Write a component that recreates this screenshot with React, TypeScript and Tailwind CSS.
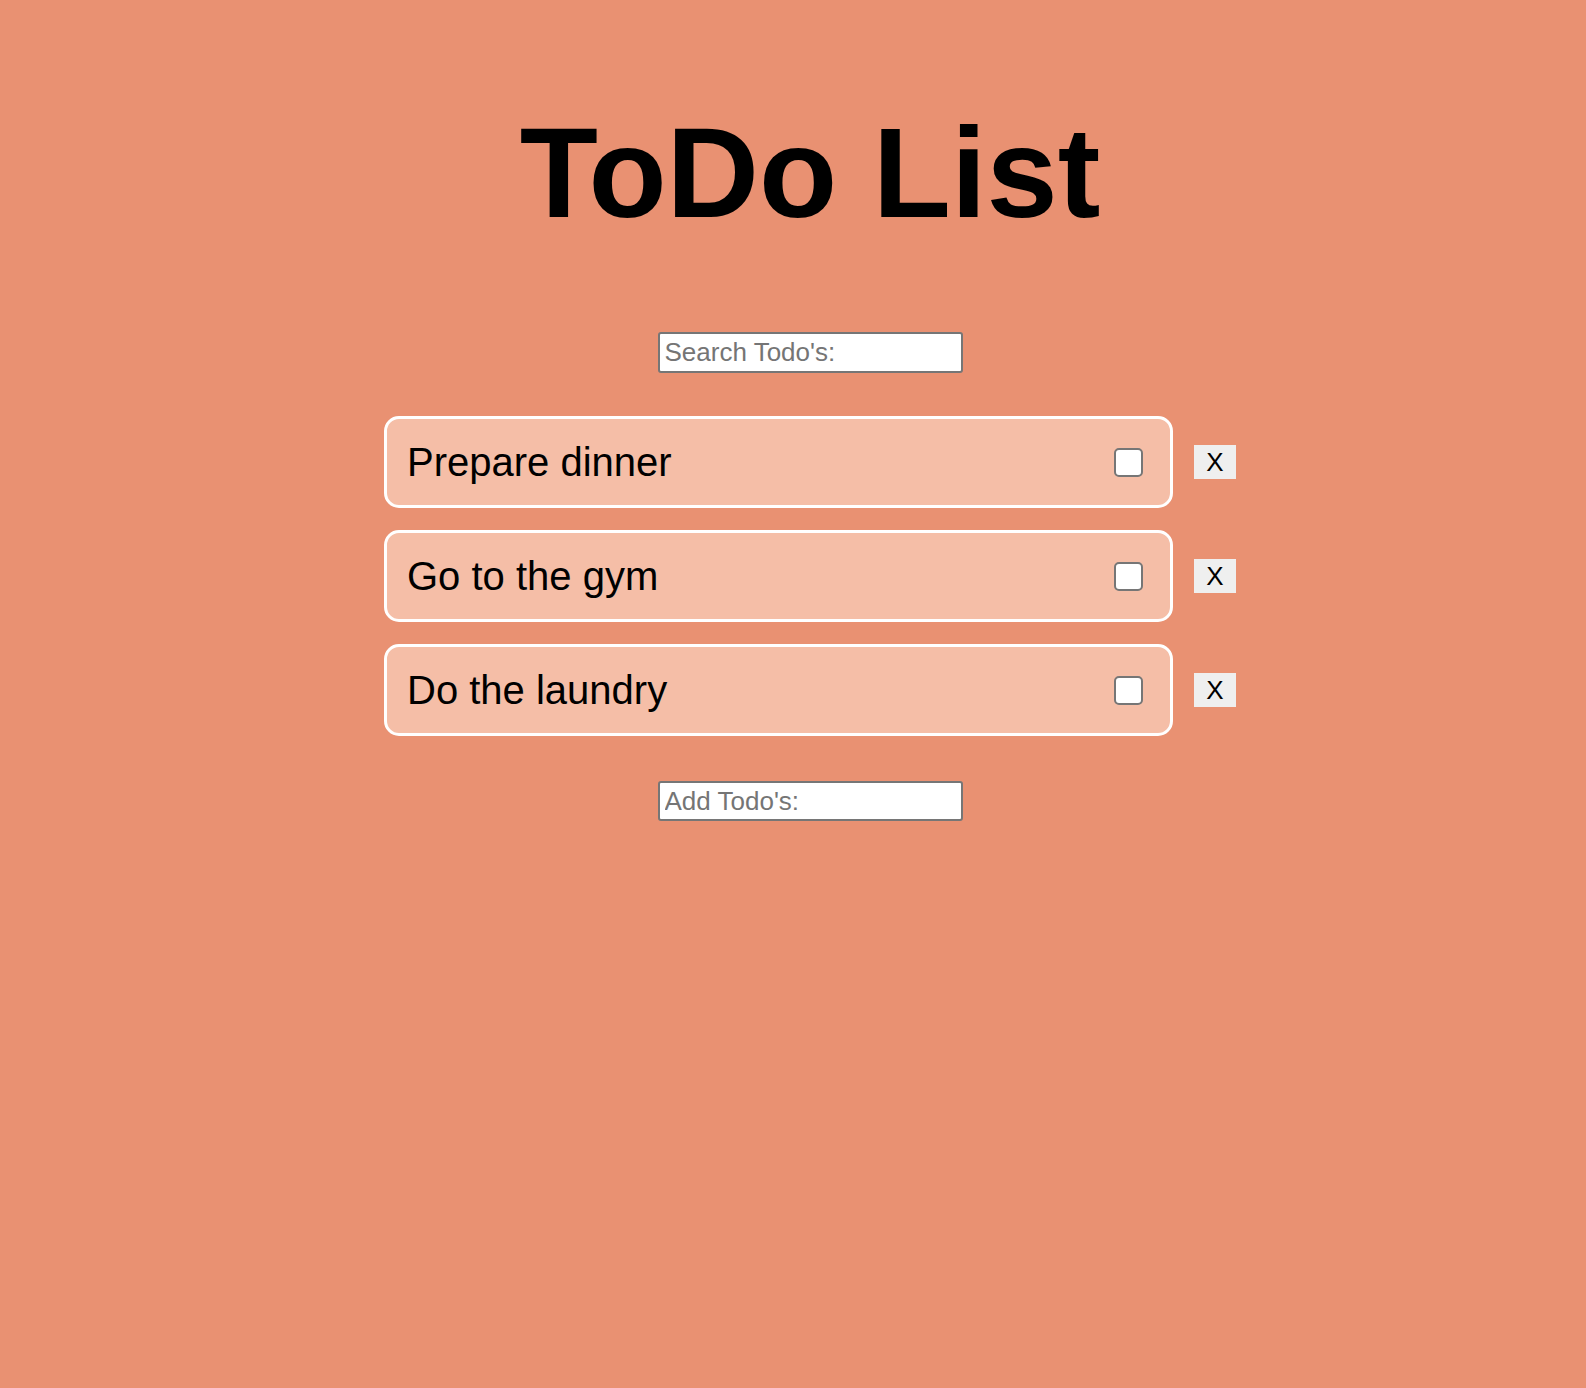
import React, { useState } from 'react';

interface Todo {
  id: number;
  text: string;
  done: boolean;
}

const initialTodos: Todo[] = [
  { id: 1, text: 'Prepare dinner', done: false },
  { id: 2, text: 'Go to the gym', done: false },
  { id: 3, text: 'Do the laundry', done: false },
];

const App: React.FC = () => {
  const [todos, setTodos] = useState<Todo[]>(initialTodos);
  const [search, setSearch] = useState('');
  const [draft, setDraft] = useState('');

  const toggle = (id: number) =>
    setTodos(todos.map((t) => (t.id === id ? { ...t, done: !t.done } : t)));

  const remove = (id: number) => setTodos(todos.filter((t) => t.id !== id));

  const addTodo = (e: React.KeyboardEvent<HTMLInputElement>) => {
    if (e.key !== 'Enter' || !draft.trim()) return;
    setTodos([...todos, { id: Date.now(), text: draft.trim(), done: false }]);
    setDraft('');
  };

  const visible = todos.filter((t) => t.text.toLowerCase().includes(search.toLowerCase()));

  return (
    <div className="min-h-screen bg-[#e99172] pl-[34px] pt-[101px] flex flex-col items-center font-['Liberation_Sans',Arial,sans-serif] text-black">
      <h1 className="text-[128px] leading-[143px] font-bold">ToDo List</h1>

      <input
        type="text"
        value={search}
        onChange={(e) => setSearch(e.target.value)}
        placeholder="Search Todo's:"
        className="mt-[88px] w-[305px] h-[41px] px-[5px] bg-white border-2 border-[#767676] rounded-[3px] text-[26px] placeholder:text-[#757575] outline-none"
      />

      <ul className="mt-[43px] flex flex-col gap-[22px]">
        {visible.map((todo) => (
          <li key={todo.id} className="flex items-center gap-[21px]">
            <div className="w-[789px] h-[92px] flex items-center justify-between pl-[20px] pr-[27px] bg-[#f5bea7] border-[3px] border-white rounded-[15px]">
              <span className={`text-[40px] leading-[46px] ${todo.done ? 'line-through' : ''}`}>{todo.text}</span>
              <input
                type="checkbox"
                checked={todo.done}
                onChange={() => toggle(todo.id)}
                className="appearance-none w-[29px] h-[29px] bg-white border-2 border-[#767676] rounded-[5px] checked:bg-[#0075ff] checked:border-[#0075ff]"
              />
            </div>
            <button
              onClick={() => remove(todo.id)}
              className="w-[42px] h-[34px] flex items-center justify-center bg-[#efefef] text-[26px] leading-none"
            >
              X
            </button>
          </li>
        ))}
      </ul>

      <input
        type="text"
        value={draft}
        onChange={(e) => setDraft(e.target.value)}
        onKeyDown={addTodo}
        placeholder="Add Todo's:"
        className="mt-[45px] w-[305px] h-[40px] px-[5px] bg-white border-2 border-[#767676] rounded-[3px] text-[26px] placeholder:text-[#757575] outline-none"
      />
    </div>
  );
};

export default App;
